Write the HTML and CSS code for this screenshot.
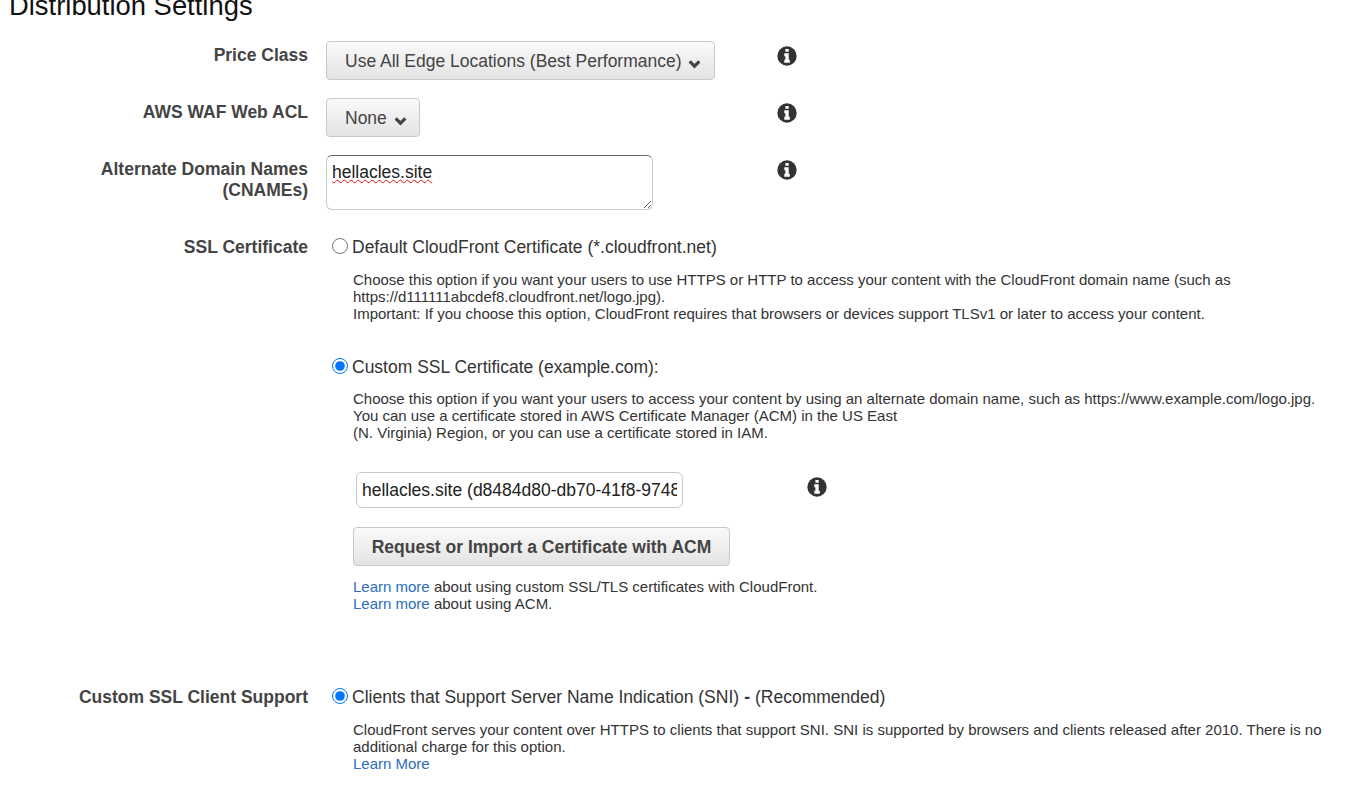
FILE: index.html
```html
<!DOCTYPE html>
<html lang="en">
<head>
<meta charset="utf-8">
<title>Distribution Settings</title>
<link rel="stylesheet" href="styles.css">
</head>
<body>
<svg class="defs" width="0" height="0" aria-hidden="true">
  <symbol id="info" viewBox="0 0 20 20">
    <circle cx="10" cy="10" r="9.7" fill="#333"/>
    <path fill="#fff" d="M8.4 2.900h3.300v2.900H8.400zM7.300 7.300h4.400v6.400h1.100v3H7.300v-3h1.100v-3.400H7.300z"/>
  </symbol>
  <symbol id="chev" viewBox="0 0 14 10">
    <path fill="none" stroke="#444" stroke-width="3.400" d="M1.800 2.200l5.200 5.200 5.200-5.200"/>
  </symbol>
</svg>
<h1 class="title">Distribution Settings</h1>

<div class="row row-price">
  <div class="label">Price Class</div>
  <div class="field field-short">
    <button class="select select-wide" type="button">Use All Edge Locations (Best Performance) <svg class="chev"><use href="#chev"/></svg></button>
  </div>
  <svg class="info"><use href="#info"/></svg>
</div>

<div class="row row-waf">
  <div class="label">AWS WAF Web ACL</div>
  <div class="field field-short">
    <button class="select" type="button">None <svg class="chev"><use href="#chev"/></svg></button>
  </div>
  <svg class="info"><use href="#info"/></svg>
</div>

<div class="row row-cname">
  <div class="label">Alternate Domain Names<br>(CNAMEs)</div>
  <div class="field field-short">
    <div class="textarea"><span class="misspelled">hellacles.site</span></div>
  </div>
  <svg class="info"><use href="#info"/></svg>
</div>

<div class="row row-ssl">
  <div class="label label-radio">SSL Certificate</div>
  <div class="field">
    <label class="radio"><input type="radio" name="ssl">Default CloudFront Certificate (*.cloudfront.net)</label>
    <p class="help help-default">Choose this option if you want your users to use HTTPS or HTTP to access your content with the CloudFront domain name (such as<br>https://d111111abcdef8.cloudfront.net/logo.jpg).<br>Important: If you choose this option, CloudFront requires that browsers or devices support TLSv1 or later to access your content.</p>

    <label class="radio radio-custom"><input type="radio" name="ssl" checked>Custom SSL Certificate (example.com):</label>
    <p class="help help-custom">Choose this option if you want your users to access your content by using an alternate domain name, such as https://www.example.com/logo.jpg.<br>You can use a certificate stored in AWS Certificate Manager (ACM) in the US East<br>(N. Virginia) Region, or you can use a certificate stored in IAM.</p>

    <div class="cert-row">
      <input class="cert" type="text" readonly value="hellacles.site (d8484d80-db70-41f8-9748-5e1c7a20b6f3)">
      <svg class="info"><use href="#info"/></svg>
    </div>
    <button class="action" type="button">Request or Import a Certificate with ACM</button>
    <p class="help help-links"><a href="#">Learn more</a> about using custom SSL/TLS certificates with CloudFront.<br><a href="#">Learn more</a> about using ACM.</p>
  </div>
</div>

<div class="row row-client">
  <div class="label label-radio">Custom SSL Client Support</div>
  <div class="field">
    <label class="radio"><input type="radio" name="client" checked>Clients that Support Server Name Indication (SNI) <b class="dash">-</b> (Recommended)</label>
    <p class="help help-client">CloudFront serves your content over HTTPS to clients that support SNI. SNI is supported by browsers and clients released after 2010. There is no<br>additional charge for this option.<br><a href="#">Learn More</a></p>
  </div>
</div>
</body>
</html>
```

FILE: styles.css
```css
html, body {
  margin: 0;
  padding: 0;
  background: #fff;
  overflow: hidden;
}
body {
  height: 792px;
  font-family: "Liberation Sans", Arial, sans-serif;
  color: #333;
}
.defs { display: block; height: 0; }
.title {
  margin: -9px 0 0 9px;
  height: 40px;
  font-size: 27.4px;
  line-height: 30px;
  font-weight: 400;
  color: #111;
}
.row {
  display: flex;
  align-items: flex-start;
}
.row-price { height: 57px; margin-top: 10px; }
.row-waf { height: 57px; }
.row-cname { height: 82px; }
.row-client { margin-top: 75px; }
.label {
  width: 308px;
  flex: none;
  padding-top: 4px;
  text-align: right;
  font-size: 17.5px;
  line-height: 21px;
  font-weight: 700;
  color: #444;
}
.label-radio { padding-top: 0; }
.field {
  margin-left: 18px;
  flex: 1;
  min-width: 0;
}
.field-short {
  flex: none;
  width: 451px;
}
.info {
  width: 20px;
  height: 20px;
  flex: none;
}
.row > .info { margin-top: 5px; }
.select {
  display: inline-block;
  box-sizing: border-box;
  height: 39px;
  padding: 2px 12px 0 18px;
  border: 1px solid #c8c8c8;
  border-radius: 4px;
  background: linear-gradient(#fafafa, #e3e3e3);
  font: 17.5px "Liberation Sans", Arial, sans-serif;
  color: #444;
  white-space: nowrap;
}
.select-wide { padding-right: 13px; }
.chev {
  width: 13px;
  height: 10px;
  margin-left: 2px;
  vertical-align: -2px;
}
.textarea {
  box-sizing: border-box;
  width: 327px;
  height: 55px;
  padding: 4px 5px;
  border: 1px solid #c9c9c9;
  border-top-color: #666;
  border-radius: 6px;
  font-size: 17.5px;
  line-height: 24px;
  color: #222;
  overflow: auto;
  resize: both;
}
.misspelled {
  text-decoration: underline wavy #e01010 1px;
  text-underline-offset: 1px;
}
.radio {
  display: flex;
  align-items: center;
  height: 21px;
  margin-left: 6px;
  font-size: 17.5px;
  line-height: 21px;
  color: #333;
}
.radio input {
  width: 16px;
  height: 16px;
  margin: -3px 4px 0 0;
  accent-color: #0075ff;
}
.dash { margin: 0 5px; }
.help {
  margin: 13px 0 0 27px;
  font-size: 15px;
  line-height: 17px;
  color: #333;
  white-space: nowrap;
}
.help a {
  color: #2a6ebb;
  text-decoration: none;
}
.radio-custom { margin-top: 35px; }
.help-custom { margin-top: 12px; }
.cert-row {
  display: flex;
  align-items: flex-start;
  margin: 31px 0 0 30px;
}
.cert {
  box-sizing: border-box;
  width: 327px;
  height: 36px;
  padding: 0 5px;
  border: 1px solid #c9c9c9;
  border-radius: 6px;
  font: 17.5px "Liberation Sans", Arial, sans-serif;
  color: #222;
  outline: none;
}
.cert-row .info { margin: 5px 0 0 124px; }
.action {
  display: block;
  box-sizing: border-box;
  width: 377px;
  height: 39px;
  margin: 19px 0 0 27px;
  padding: 2px 0 0;
  border: 1px solid #c8c8c8;
  border-radius: 4px;
  background: linear-gradient(#fafafa, #e3e3e3);
  font: 700 17.5px "Liberation Sans", Arial, sans-serif;
  color: #444;
}
.help-links { margin-top: 12px; }
.help-client { margin-top: 13px; }
```
